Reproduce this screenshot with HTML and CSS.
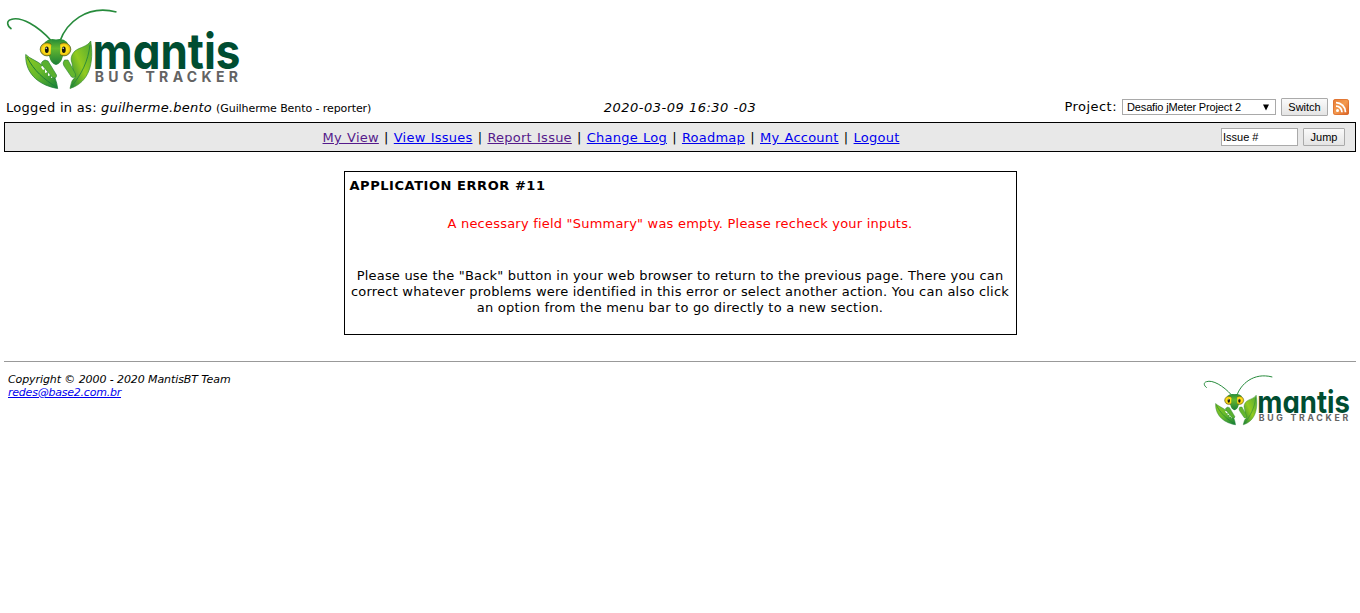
FILE: index.html
```html
<!DOCTYPE html>
<html lang="en">
<head>
<meta charset="utf-8">
<title>MantisBT</title>
<link rel="stylesheet" href="styles.css">
</head>
<body>
<svg class="defs" width="0" height="0" aria-hidden="true">
  <defs>
    <linearGradient id="leaf" x1="0" y1="0" x2="1" y2="1"><stop offset="0" stop-color="#8fca20"/><stop offset=".5" stop-color="#65b82b"/><stop offset="1" stop-color="#158039"/></linearGradient>
    <linearGradient id="leafr" x1="1" y1="0" x2="0" y2="1"><stop offset="0" stop-color="#4ca733"/><stop offset=".5" stop-color="#93cb20"/><stop offset="1" stop-color="#188239"/></linearGradient>
    <linearGradient id="face" x1="0" y1="0" x2="0" y2="1"><stop offset="0" stop-color="#278d38"/><stop offset=".35" stop-color="#65b82e"/><stop offset="1" stop-color="#1e8137"/></linearGradient>
    <radialGradient id="eye"><stop offset="0" stop-color="#ffed22"/><stop offset=".65" stop-color="#fbdc16"/><stop offset="1" stop-color="#d49c10"/></radialGradient>
    <symbol id="logo" viewBox="4 4 240 88">
      <path d="M11.500 29C7 26 6 21 11 19.500C21 16 38 26 51.500 41" fill="none" stroke="#278b3c" stroke-width="1.600"/>
      <path d="M60 41C66 24 86 4 116.500 12" fill="none" stroke="#278b3c" stroke-width="1.600"/>
      <path d="M25.700 54.500C30 59 38 61 43 66L52 77L55 78Q57 83 57.700 88.500C42 86 25 76 25.700 54.500Z" fill="url(#leaf)" stroke="#1c7836" stroke-width=".7"/>
      <path d="M27 57C34 71 44 79 56 87" fill="none" stroke="#1d7e37" stroke-width="1"/>
      <path d="M90.700 41C94 62 90 82 70 88.500Q71 82 74 77L72 63C70 58 72 54 75 51C80 47 87 47 90.700 41Z" fill="url(#leafr)" stroke="#388d2d" stroke-width=".7"/>
      <path d="M90 45C88 61 82 74 71 87" fill="none" stroke="#27863a" stroke-width=".9"/>
      <path d="M41 67l2 3 2-1v4l3-1v4l3-1v3l3-1-10-13ZM63 69l1 4 2-1v4l3-2v5l3-2v3l3-3-9-12Z" fill="#fff"/>
      <path d="M45 60Q40 62 42 65L52.500 77.500Q57 79 56.500 75L48 61Z" fill="#59b02e" stroke="#1c7836" stroke-width=".6"/>
      <path d="M64.500 60Q62 63 64 66L71.500 77Q76 79 75.500 74L68 60Z" fill="#64b62e" stroke="#278336" stroke-width=".6"/>
      <path d="M45 42Q49 38 56 39.500Q63 38 67 42Q72 52 63 56Q61 64 56 65Q51 64 49 56Q40 52 45 42Z" fill="url(#face)"/>
      <ellipse cx="47" cy="49.300" rx="6.800" ry="6.600" fill="url(#eye)" stroke="#365e19" stroke-width=".7"/>
      <ellipse cx="64" cy="49.300" rx="6.800" ry="6.600" fill="url(#eye)" stroke="#365e19" stroke-width=".7"/>
      <path d="M52.500 40Q50 48 51 57Q53 64 56 64Q59 64 60 57Q61 48 59.500 40Z" fill="url(#face)"/>
      <ellipse cx="46.800" cy="49.800" rx="1.900" ry="3.200" fill="#17170c"/><ellipse cx="63.800" cy="49.800" rx="1.900" ry="3.200" fill="#17170c"/>
      <circle cx="46.200" cy="48.300" r=".7" fill="#fff"/><circle cx="63.200" cy="48.300" r=".7" fill="#fff"/>
      <text class="brand" x="92.500" y="69.300" textLength="148" lengthAdjust="spacingAndGlyphs">mantis</text>
      <text class="tagline" x="94.700" y="82.300" textLength="143.300">BUG TRACKER</text>
    </symbol>
  </defs>
</svg>
<header class="masthead"><svg class="logo" width="240" height="88" role="img" aria-label="Mantis Bug Tracker"><use href="#logo"/></svg></header>
<div class="login">
  <div class="user"><span class="label">Logged in as:</span> <i class="username">guilherme.bento</i> <small>(Guilherme Bento - reporter)</small></div>
  <i class="time">2020-03-09 16:30 -03</i>
  <form class="project">
    <span class="project-label">Project:</span>
    <span class="select"><span>Desafio jMeter Project 2</span><svg width="8" height="7" viewBox="0 0 8 7"><path d="M1 .5h6L4 6.500Z"/></svg></span>
    <button type="button" class="switch">Switch</button>
    <svg class="rss" width="16" height="16" viewBox="0 0 16 16"><defs><linearGradient id="rss" x2="1" y2="1"><stop stop-color="#e77b32"/><stop offset=".5" stop-color="#f39a50"/><stop offset="1" stop-color="#d95e20"/></linearGradient></defs><rect width="16" height="16" rx="2.500" fill="url(#rss)"/><rect x=".5" y=".5" width="15" height="15" rx="2" fill="none" stroke="#d9692c" stroke-opacity=".6"/><circle cx="4.500" cy="11.600" r="1.500" fill="#fff"/><path d="M3 7.200a6 6 0 0 1 6 6M3 3.700a9.500 9.500 0 0 1 9.500 9.500" fill="none" stroke="#fff" stroke-width="1.800"/></svg>
  </form>
</div>
<nav class="menu">
  <div class="links"><a href="#" class="seen">My View</a> | <a href="#">View Issues</a> | <a href="#" class="seen">Report Issue</a> | <a href="#">Change Log</a> | <a href="#">Roadmap</a> | <a href="#">My Account</a> | <a href="#">Logout</a></div>
  <form class="jump"><input type="text" value="Issue #" aria-label="Issue number"><button type="button">Jump</button></form>
</nav>
<main class="error">
  <h1>APPLICATION ERROR #11</h1>
  <p class="message">A necessary field "Summary" was empty. Please recheck your inputs.</p>
  <p class="advice">Please use the "Back" button in your web browser to return to the previous page. There you can<br>correct whatever problems were identified in this error or select another action. You can also click<br>an option from the menu bar to go directly to a new section.</p>
</main>
<footer class="footer">
  <address>Copyright © 2000 - 2020 MantisBT Team<br><a href="#">redes@base2.com.br</a></address>
  <svg class="logo-small" width="150" height="55" role="img" aria-label="Mantis Bug Tracker"><use href="#logo"/></svg>
</footer>
</body>
</html>
```
FILE: styles.css
```css
* { box-sizing: border-box; }
body { margin: 4px; background: #fff; color: #000; font: 13px/16px Verdana, "DejaVu Sans", sans-serif; white-space: nowrap; }
.defs { position: absolute; }
a { color: #00e; }
.seen { color: #551a8b; }
.masthead { height: 92px; }
.logo, .logo-small { display: block; }
.brand { font: 700 50px Inter, sans-serif; font-feature-settings: "cv11"; fill: #004d31; }
.tagline { font: 700 14px Inter, sans-serif; fill: #636363; }
.login { display: grid; grid-template-columns: 1fr auto 1fr; align-items: center; height: 22px; padding: 0 7px; }
.user { margin-left: -5px; padding-top: 2px; }
.label { letter-spacing: .3px; }
.username { letter-spacing: .22px; }
.time { padding-top: 2px; letter-spacing: .5px; }
.user small { font-size: 11px; letter-spacing: -.08px; }
.project { display: flex; justify-content: flex-end; align-items: center; gap: 5px; margin: 0; }
.project-label { letter-spacing: .45px; }
.select { display: flex; align-items: center; justify-content: space-between; width: 154px; height: 16px; padding: 0 5px 0 4px; border: 1px solid #a9a9a9; font: 11px/14px Arial, "Liberation Sans", sans-serif; letter-spacing: -.14px; }
button { height: 18px; padding: 0; border: 1px solid #aaa; border-radius: 1px; background: linear-gradient(#fafafa, #e4e4e4); color: #000; font: 11px/14px Arial, "Liberation Sans", sans-serif; }
.switch { width: 47px; }
.menu { display: flex; align-items: center; height: 30px; margin-top: 4px; border: 1px solid #000; background: #e8e8e8; }
.links { flex: 1; padding: 2px 4px 0 0; text-align: center; letter-spacing: .23px; word-spacing: .8px; }
.jump { display: flex; gap: 5px; margin: 0 10px 0 0; }
.jump input { width: 77px; height: 18px; padding: 0 1px; border: 1px solid #aaa; background: #fff; color: #000; font: 11px/14px Arial, "Liberation Sans", sans-serif; }
.jump button { width: 42px; }
.error { width: 673px; height: 164px; margin: 19px auto 0; padding: 6px 5px; border: 1px solid #000; text-align: center; letter-spacing: .21px; }
.error h1 { margin: 0; font-size: 13px; line-height: 16px; text-align: left; letter-spacing: .55px; }
.error p { margin: 0; }
.error .message { margin: 22px 0 36px; color: #f00; }
.footer { display: flex; justify-content: space-between; margin-top: 26px; padding: 10px 4px 0; border-top: 1px solid #999; }
.footer address { padding-top: 1px; font-size: 11px; line-height: 13px; letter-spacing: -.09px; }
.footer a { letter-spacing: -.22px; }
```
